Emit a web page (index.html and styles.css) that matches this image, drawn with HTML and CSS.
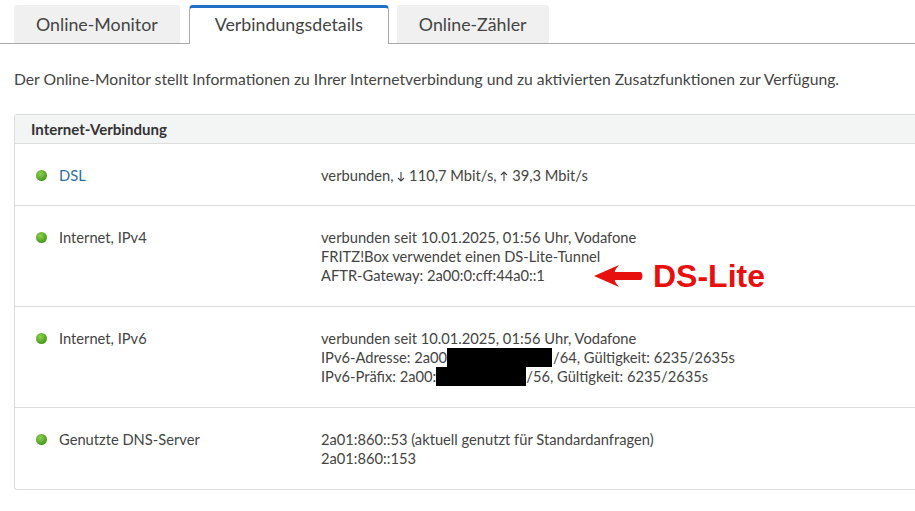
FILE: index.html
```html
<!DOCTYPE html>
<html lang="de">
<head>
<meta charset="utf-8">
<title>Verbindungsdetails</title>
<link rel="stylesheet" href="styles.css">
</head>
<body>
<div class="tabs">
  <div class="tab">Online-Monitor</div>
  <div class="tab active">Verbindungsdetails</div>
  <div class="tab">Online-Zähler</div>
</div>
<p class="intro">Der Online-Monitor stellt Informationen zu Ihrer Internetverbindung und zu aktivierten Zusatzfunktionen zur Verfügung.</p>
<div class="box">
  <div class="box-head">Internet-Verbindung</div>
  <div class="row single">
    <div class="label"><span class="dot"></span><a class="link">DSL</a></div>
    <div class="value">verbunden, <svg class="arr" width="8" height="11" viewBox="0 0 8 11"><path d="M4 1 V10 M1 7 L4 10 L7 7" fill="none" stroke="#444" stroke-width="1.1"/></svg> 110,7 Mbit/s, <svg class="arr" width="8" height="11" viewBox="0 0 8 11"><path d="M4 10 V1 M1 4 L4 1 L7 4" fill="none" stroke="#444" stroke-width="1.1"/></svg> 39,3 Mbit/s</div>
  </div>
  <div class="row">
    <div class="label"><span class="dot"></span>Internet, IPv4</div>
    <div class="value">verbunden seit 10.01.2025, 01:56 Uhr, Vodafone<br>FRITZ!Box verwendet einen DS-Lite-Tunnel<br>AFTR-Gateway: 2a00:0:cff:44a0::1</div>
    <div class="note"><svg class="note-arrow" width="50" height="24" viewBox="0 0 50 24"><path d="M0 12 L25 1 Q20 7 21 8 L47 8 Q50 12 47 16 L21 16 Q20 17 25 23 Z" fill="#e8100f"/></svg><span class="note-text">DS-Lite</span></div>
  </div>
  <div class="row">
    <div class="label"><span class="dot"></span>Internet, IPv6</div>
    <div class="value">verbunden seit 10.01.2025, 01:56 Uhr, Vodafone<br>IPv6-Adresse: 2a00<span class="redact r1"></span>/64, Gültigkeit: 6235/2635s<br>IPv6-Präfix: 2a00:<span class="redact r2"></span>/56, Gültigkeit: 6235/2635s</div>
  </div>
  <div class="row last">
    <div class="label"><span class="dot"></span>Genutzte DNS-Server</div>
    <div class="value">2a01:860::53 (aktuell genutzt für Standardanfragen)<br>2a01:860::153</div>
  </div>
</div>
</body>
</html>
```
FILE: styles.css
```css
html, body {
  margin: 0;
  padding: 0;
  background: #fff;
  overflow: hidden;
}
body {
  font-family: "Lato", "Liberation Sans", sans-serif;
  font-size: 14.7px;
  color: #444;
  width: 915px;
  height: 511px;
}
.tabs {
  display: flex;
  align-items: flex-end;
  gap: 8px;
  padding: 5px 0 0 14px;
  border-bottom: 1px solid #aaa;
  height: 38px;
}
.tab {
  height: 38px;
  box-sizing: border-box;
  background: #f0f0f0;
  border-radius: 3px 3px 0 0;
  padding: 0 22px 1px;
  display: flex;
  align-items: center;
  font-size: 17.8px;
  color: #444;
}
.tab.active {
  background: #fff;
  border: 1px solid #aaa;
  border-top: 3px solid #1f6fc5;
  border-bottom: none;
  border-radius: 4px 4px 0 0;
  height: 39px;
  margin-bottom: -1px;
  margin-left: 1px;
  padding: 0 25px 4px;
}
.intro {
  margin: 25px 0 0 14px;
  line-height: 20px;
  font-size: 15.7px;
  white-space: nowrap;
}
.box {
  margin: 25px 0 0 14px;
  border: 1px solid #ddd;
  border-right: none;
  border-radius: 3px 0 0 3px;
}
.box-head {
  background: #f3f4f4;
  border-bottom: 1px solid #ddd;
  height: 28px;
  line-height: 29px;
  padding-left: 16px;
  font-weight: 700;
  font-size: 15px;
  color: #333;
}
.row {
  display: flex;
  padding: 22px 0 21px;
  border-bottom: 1px solid #ddd;
  line-height: 19px;
  position: relative;
}
.row.single { padding-bottom: 20px; }
.row.last { border-bottom: none; padding-bottom: 21px; }
.label {
  width: 306px;
  padding-left: 21px;
  box-sizing: border-box;
  display: flex;
  align-items: flex-start;
}
.dot {
  width: 11px;
  height: 11px;
  border-radius: 50%;
  background: radial-gradient(circle at 40% 35%, #8fd14f, #4a9a1e 70%);
  margin: 4px 12px 0 0;
  flex: none;
}
.link { color: #2f6ea5; }
.value { white-space: nowrap; }
.arr { vertical-align: -1px; }
.redact {
  display: inline-block;
  background: #000;
  height: 19px;
  vertical-align: -4px;
}
.r1 { width: 105px; margin-right: 1px; }
.r2 { width: 90px; margin-right: 0; }
.note {
  position: absolute;
  left: 579px;
  top: 54px;
  display: flex;
  align-items: center;
  gap: 9px;
}
.note-text {
  font-family: "Liberation Sans", Arial, sans-serif;
  font-weight: 700;
  font-size: 32px;
  color: #e8100f;
  line-height: 32px;
}
```
